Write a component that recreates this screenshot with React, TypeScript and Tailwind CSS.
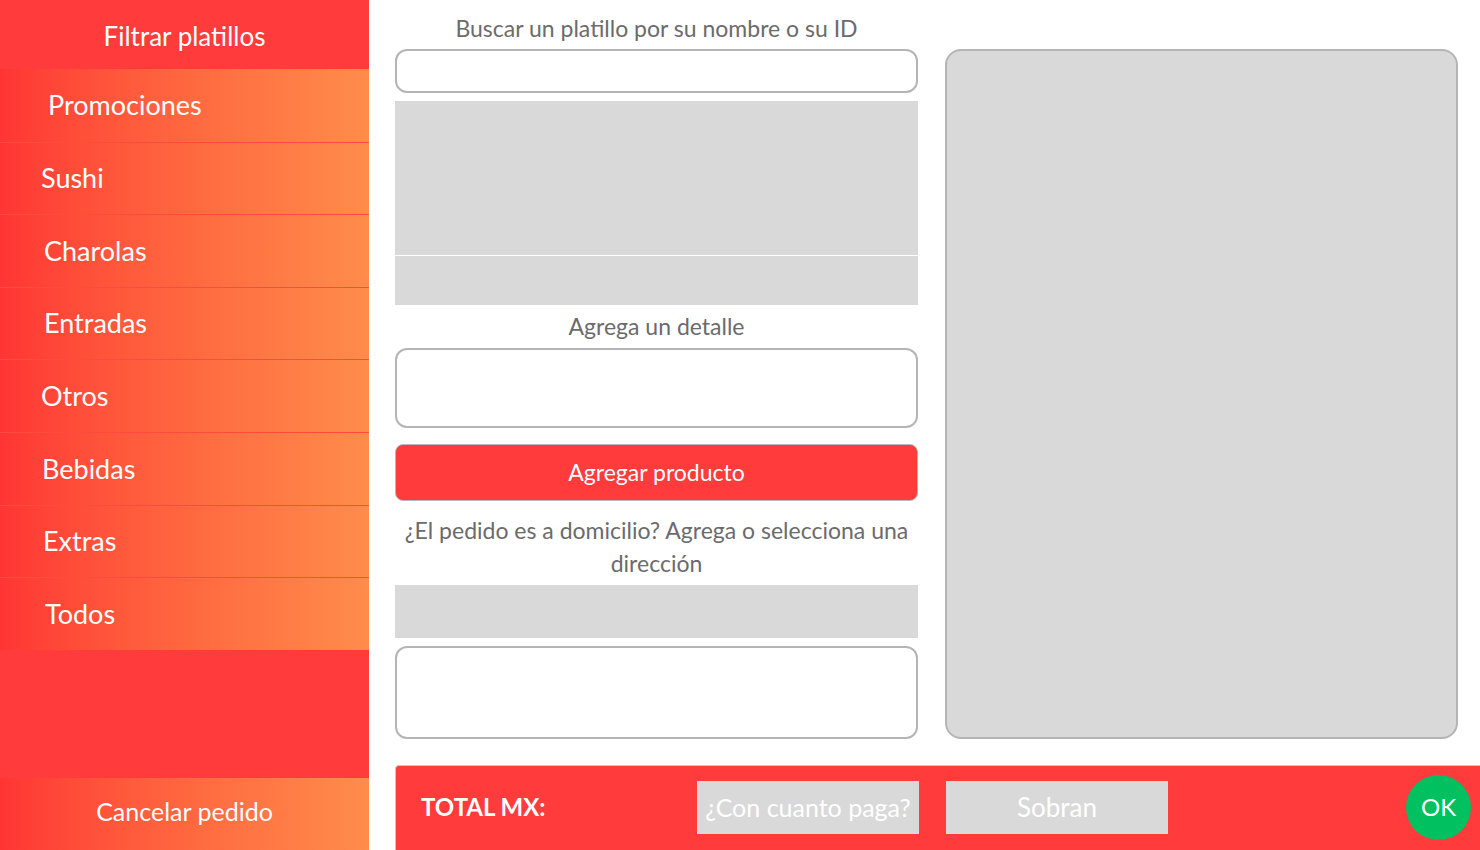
const categorias = ["Promociones", "Sushi", "Charolas", "Entradas", "Otros", "Bebidas", "Extras", "Todos"];

// pequeñas diferencias de sangría como en la captura
const sangria = ["pl-[48px]", "pl-[41px]", "pl-[44px]", "pl-[44px]", "pl-[41px]", "pl-[42px]", "pl-[43px]", "pl-[45px]"];

function Sidebar() {
  return (
    <aside className="flex h-[850px] w-[369px] shrink-0 flex-col text-white">
      <div className="flex h-[69px] items-center justify-center bg-[#ff3b3b] pt-[3px] text-[26px]">Filtrar platillos</div>
      {categorias.map((c, i) => (
        <button
          key={c}
          className={`flex h-[72.6px] items-center bg-gradient-to-r from-[#ff3434] to-[#ff8c4b] text-[27px] ${sangria[i]} ${
            i > 0 ? "border-t border-[#ff4a3f]" : ""
          }`}
        >
          {c}
        </button>
      ))}
      <div className="flex-1 bg-[#ff3b3b]" />
      <button className="flex h-[72px] items-center justify-center bg-gradient-to-r from-[#ff3434] to-[#ff8c4b] pb-[4px] text-[25px]">
        Cancelar pedido
      </button>
    </aside>
  );
}

function Etiqueta({ children, className = "" }: { children: React.ReactNode; className?: string }) {
  return <div className={`flex items-center justify-center text-center text-[23px] text-[#6b6b6b] ${className}`}>{children}</div>;
}

export default function App() {
  return (
    <div className="flex h-[850px] w-[1480px] overflow-hidden bg-white font-['Lato',sans-serif]">
      <Sidebar />
      <main className="flex flex-1 flex-col pl-[26px]">
        <div className="flex gap-[27px] pr-[22px]">
          <section className="flex w-[523px] flex-col">
            <Etiqueta className="h-[49px] pt-[7px]">Buscar un platillo por su nombre o su ID</Etiqueta>
            <input className="h-[44px] rounded-[12px] border-2 border-[#b5b5b5] bg-white px-3 outline-none" />
            <div className="mt-[8px] h-[154px] bg-[#d9d9d9]" />
            <div className="mt-px h-[49px] bg-[#d9d9d9]" />
            <Etiqueta className="h-[43px]">Agrega un detalle</Etiqueta>
            <textarea className="h-[80px] resize-none rounded-[12px] border-2 border-[#b5b5b5] bg-white outline-none" />
            <button className="mt-[16px] h-[57px] rounded-[8px] border border-[#b9b9b9] bg-[#ff3b3b] text-[23px] text-white">
              Agregar producto
            </button>
            <Etiqueta className="h-[84px] pt-[7px] leading-[33px]">
              ¿El pedido es a domicilio? Agrega o selecciona una
              <br />
              dirección
            </Etiqueta>
            <div className="h-[53px] bg-[#d9d9d9]" />
            <textarea className="mt-[8px] h-[93px] resize-none rounded-[12px] border-2 border-[#b5b5b5] bg-white outline-none" />
          </section>
          <section className="mt-[49px] h-[690px] flex-1 rounded-[16px] border-2 border-[#b5b5b5] bg-[#d9d9d9]" />
        </div>
        <footer className="mt-[26px] flex h-[85px] items-center rounded-tl-[4px] border-l border-t border-[#c9c9c9] bg-[#ff3b3b] pb-[2px]">
          <div className="flex w-[523px] items-center justify-between pl-[25px]">
            <span className="text-[24px] font-bold text-white">TOTAL MX:</span>
            <input
              placeholder="¿Con cuanto paga?"
              className="h-[53px] w-[222px] bg-[#d9d9d9] px-[4px] text-center text-[25px] text-white placeholder:text-white outline-none"
            />
          </div>
          <div className="ml-[27px] flex h-[53px] w-[222px] items-center justify-center bg-[#d9d9d9] text-[26px] text-white">
            Sobran
          </div>
          <button className="ml-auto mr-[9px] flex h-[65px] w-[65px] items-center justify-center rounded-full bg-[#00c060] text-[24px] text-white">
            OK
          </button>
        </footer>
      </main>
    </div>
  );
}
